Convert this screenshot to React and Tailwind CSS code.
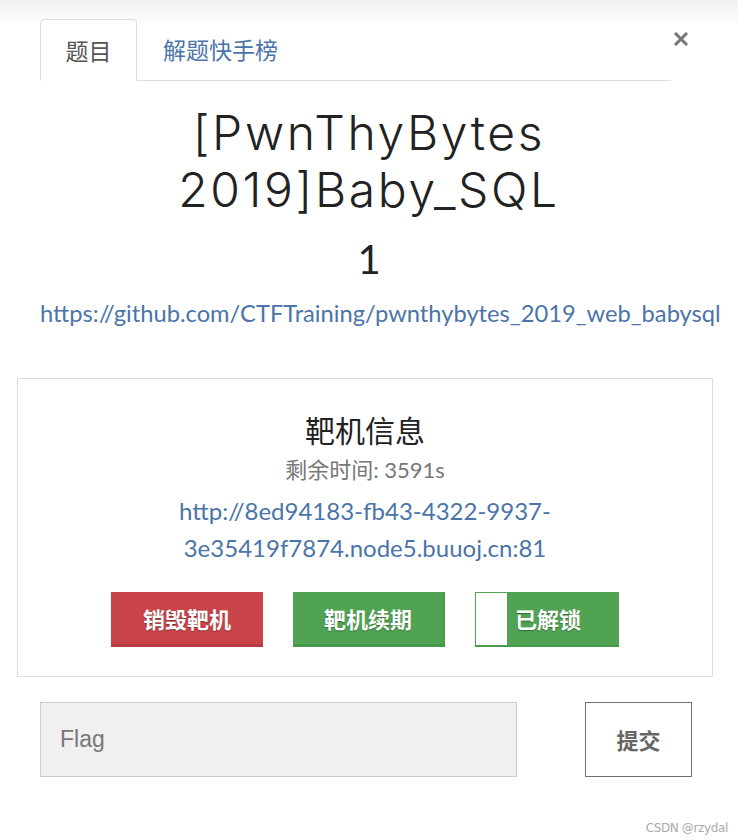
import React from "react";

const lato = "font-['Lato','Noto_Sans_CJK_SC',sans-serif]";

export default function App() {
  return (
    <div className="relative w-[738px] h-[840px] bg-[linear-gradient(to_bottom,#f1f1f1_0px,#ffffff_26px)] font-['Lato','Noto_Sans_CJK_SC',sans-serif] overflow-hidden">
      {/* Tabs header */}
      <div className="flex pt-[19px] pl-[40px]">
        <div className="flex w-[631px] h-[62px] border-b border-[#dddddd]">
          <div className="h-[62px] w-[97px] flex items-center justify-center border border-[#dddddd] border-b-white rounded-t-[4px] bg-white text-[23px] text-[#555555] font-['Noto_Sans_CJK_SC',sans-serif]">
            题目
          </div>
          <div className="h-[61px] pl-[26px] flex items-center text-[23px] text-[#4b74a9] font-['Noto_Sans_CJK_SC',sans-serif]">
            解题快手榜
          </div>
        </div>
        <div className="ml-[2px] pt-[13px]">
          <svg width="16" height="14" viewBox="0 0 16 14">
            <path d="M2 1 L14 13 M14 1 L2 13" stroke="#777777" strokeWidth="3" strokeLinecap="butt" />
          </svg>
        </div>
      </div>

      {/* Title */}
      <div className="mt-[23px] text-center text-[#222222] font-['Inter',sans-serif] font-light text-[48px] leading-[57px] tracking-[0.055em]">
        <div>[PwnThyBytes</div>
        <div>2019]Baby_SQL</div>
      </div>
      <div className={`mt-[17px] text-center text-[#222222] text-[40px] leading-[48px] ${lato}`}>1</div>
      <div className="mt-[15px] pl-[40px] text-[23.7px] leading-[30px] text-[#4b74a9] whitespace-nowrap">
        https://github.com/CTFTraining/pwnthybytes_2019_web_babysql
      </div>

      {/* Card */}
      <div className="mt-[50px] mx-[17px] w-[696px] h-[299px] border border-[#dddddd] flex flex-col items-center pt-[30px]">
        <div className="text-[30px] leading-[40px] text-[#222222] font-['Noto_Sans_CJK_SC',sans-serif]">靶机信息</div>
        <div className="mt-[6px] text-[22px] leading-[30px] text-[#777777]">剩余时间: 3591s</div>
        <div className="mt-[7px] w-[400px] text-center text-[24px] leading-[37px] text-[#4b74a9]">
          http://8ed94183-fb43-4322-9937-
          <br />
          3e35419f7874.node5.buuoj.cn:81
        </div>
        <div className="mt-[26px] flex gap-[30px]">
          <div className="w-[152px] h-[55px] bg-[#c9444a] border-b-[3px] border-[#b83d43] flex items-center justify-center text-white text-[22px] font-bold font-['Noto_Sans_CJK_SC',sans-serif] [text-shadow:0_1px_1px_rgba(0,0,0,0.35)]">
            销毁靶机
          </div>
          <div className="w-[152px] h-[55px] bg-[#4fa352] border-b-[3px] border-[#47984a] border-r-[2px] border-r-[#4a9c4d] flex items-center justify-center text-white text-[22px] font-bold font-['Noto_Sans_CJK_SC',sans-serif] [text-shadow:0_1px_1px_rgba(0,0,0,0.35)]">
            靶机续期
          </div>
          <div className="relative w-[144px] h-[55px] bg-[#4fa352] border-b-[2px] border-[#47984a] flex items-center justify-center text-white text-[22px] font-bold font-['Noto_Sans_CJK_SC',sans-serif] [text-shadow:0_1px_1px_rgba(0,0,0,0.35)]">
            <span className="pl-[2px]">已解锁</span>
            <div className="absolute left-0 top-0 w-[33px] h-[54px] bg-white border border-[#4fa352]" />
          </div>
        </div>
      </div>

      {/* Flag row */}
      <div className="mt-[25px] flex pl-[40px]">
        <div className="w-[477px] h-[75px] bg-[#f0f0f0] border border-[#cccccc] flex items-center pl-[19px] text-[23px] text-[#777777] font-['Liberation_Sans',sans-serif]">
          Flag
        </div>
        <div className="ml-[68px] w-[107px] h-[75px] border border-[#707070] flex items-center justify-center text-[22px] font-bold text-[#666666] font-['Noto_Sans_CJK_SC',sans-serif]">
          提交
        </div>
      </div>

      <div className="absolute right-[10px] bottom-[5px] text-[12px] leading-[14px] text-[#aaaaaa] font-['DejaVu_Sans',sans-serif] tracking-[-0.03em]">
        CSDN @rzydal
      </div>
    </div>
  );
}
